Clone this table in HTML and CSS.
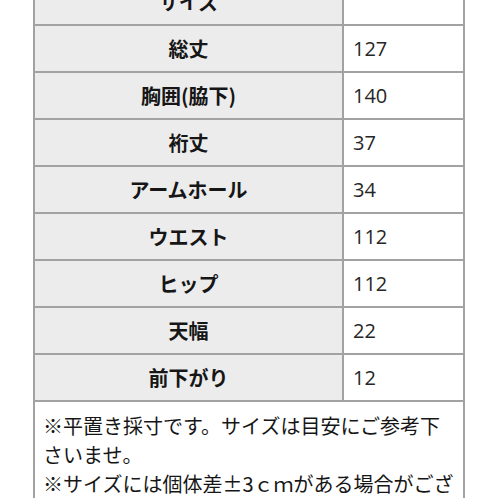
FILE: index.html
```html
<!DOCTYPE html>
<html lang="ja">
<head>
<meta charset="utf-8">
<link rel="stylesheet" href="styles.css">
</head>
<body>
<div class="sheet">
  <table class="size-table">
    <colgroup><col class="c-head"><col class="c-val"></colgroup>
    <tr><th>サイズ</th><td></td></tr>
    <tr><th>総丈</th><td>127</td></tr>
    <tr><th>胸囲(脇下)</th><td>140</td></tr>
    <tr><th>裄丈</th><td>37</td></tr>
    <tr><th>アームホール</th><td>34</td></tr>
    <tr><th>ウエスト</th><td>112</td></tr>
    <tr><th>ヒップ</th><td>112</td></tr>
    <tr><th>天幅</th><td>22</td></tr>
    <tr><th>前下がり</th><td>12</td></tr>
  </table>
  <div class="note">
    <p>※平置き採寸です。サイズは目安にご参考下さいませ。</p>
    <p>※サイズには個体差±3ｃｍがある場合がございます。</p>
  </div>
</div>
</body>
</html>
```

FILE: styles.css
```css
html, body {
  margin: 0;
  padding: 0;
  background: #ffffff;
}
body {
  width: 498px;
  height: 498px;
  overflow: hidden;
  font-family: "Noto Sans CJK JP", "Noto Sans", sans-serif;
}
.sheet {
  margin-top: -23px;
  margin-left: 33px;
  width: 432px;
}
.size-table {
  width: 432px;
  border-collapse: collapse;
  table-layout: fixed;
}
.c-head { width: 309px; }
.c-val { width: 121px; }
.size-table th,
.size-table td {
  border: 2px solid #a2a2a2;
  height: 47px;
  padding: 0;
  font-size: 20px;
  line-height: 24px;
  box-sizing: border-box;
}
.size-table th {
  background: #ececec;
  color: #161616;
  font-weight: bold;
  text-align: center;
}
.size-table td {
  background: #ffffff;
  color: #262626;
  text-align: left;
  padding-left: 9px;
  font-family: "Open Sans", "Noto Sans CJK JP", sans-serif;
}
.note {
  border-left: 2px solid #a2a2a2;
  border-right: 2px solid #a2a2a2;
  padding: 9px 8px 0 8px;
  font-size: 20px;
  line-height: 29px;
  color: #161616;
}
.note p {
  margin: 0;
}
```
